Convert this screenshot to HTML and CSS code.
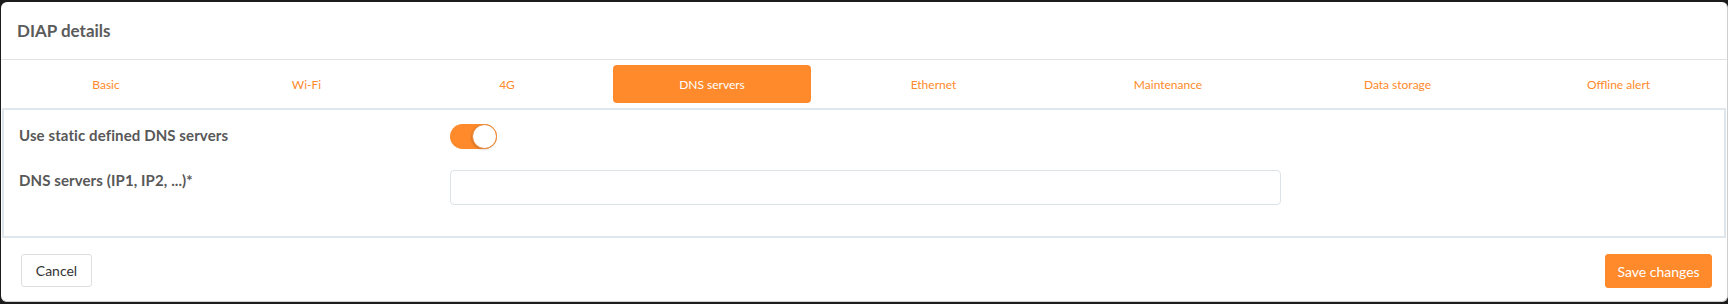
FILE: index.html
```html
<!DOCTYPE html>
<html lang="en">
<head>
  <meta charset="UTF-8" />
  <meta name="viewport" content="width=device-width,initial-scale=1.0">
  <title>DIAP details</title>
  <link rel="stylesheet" href="styles.css">
</head>
<body>
  <div class="modal">
    <div class="modal-header">
      <h4 class="modal-title">DIAP details</h4>
    </div>

    <ul class="tabs">
      <li><a href="#">Basic</a></li>
      <li><a href="#">Wi-Fi</a></li>
      <li><a href="#">4G</a></li>
      <li><a href="#" class="active">DNS servers</a></li>
      <li><a href="#">Ethernet</a></li>
      <li><a href="#">Maintenance</a></li>
      <li><a href="#">Data storage</a></li>
      <li><a href="#">Offline alert</a></li>
    </ul>

    <div class="tab-panel">
      <div class="form-row">
        <label class="form-label">Use static defined DNS servers</label>
        <div class="form-control">
          <span class="switch on"><span class="knob"></span></span>
        </div>
      </div>
      <div class="form-row">
        <label class="form-label" for="dns">DNS servers (IP1, IP2, ...)*</label>
        <div class="form-control">
          <input id="dns" class="text-input" type="text">
        </div>
      </div>
    </div>

    <div class="modal-footer">
      <button class="btn btn-default">Cancel</button>
      <button class="btn btn-primary">Save changes</button>
    </div>
  </div>
</body>
</html>
```

FILE: styles.css
```css
html, body {
  margin: 0;
  padding: 0;
  height: 100vh;
  overflow: hidden;
  background-color: #1c1c1c;
  font-family: Lato, "Open Sans", sans-serif;
}

.modal {
  display: flex;
  flex-direction: column;
  box-sizing: border-box;
  width: 1727px;
  height: 300px;
  margin: 2px 0 0 1px;
  background: #fff;
  border-right: 1px solid #cfcfcf;
  border-bottom: 1px solid #cfcfcf;
  border-radius: 6px;
  overflow: hidden;
}

.modal-header {
  flex: 0 0 58px;
  display: flex;
  align-items: center;
  padding: 0 16px;
  border-bottom: 1px solid #e2e2e2;
  box-sizing: border-box;
}

.modal-title {
  margin: 0;
  font-size: 17px;
  font-weight: 700;
  color: #5b5b5b;
}

/* column widths follow the original tab spacing */
.tabs {
  display: grid;
  grid-template-columns: 202fr 199fr 202fr 208fr 235fr 234fr 225fr 217fr;
  list-style: none;
  margin: 0;
  padding: 5px 0 5px 4px;
}

.tabs li {
  padding: 0 5px;
}

.tabs a {
  display: flex;
  align-items: center;
  justify-content: center;
  height: 38px;
  border-radius: 4px;
  font-size: 12px;
  color: #ff8a2b;
  text-decoration: none;
}

.tabs a.active {
  background: #ff8a2b;
  color: #fff;
}

.tab-panel {
  margin: 0 1px;
  padding: 14px 15px 31px;
  border: 2px solid #dfe6ec;
  display: flex;
  flex-direction: column;
  gap: 21px;
}

.form-row {
  display: grid;
  grid-template-columns: 431px 831px;
}

.form-label {
  font-size: 15px;
  font-weight: 700;
  color: #585858;
  line-height: 22px;
  letter-spacing: 0.1px;
}

.form-row + .form-row .form-label {
  line-height: 20px;
}

.switch {
  display: block;
  position: relative;
  width: 47px;
  height: 25px;
  border-radius: 13px;
  background: #ff8a2b;
}

.switch .knob {
  position: absolute;
  top: 0;
  right: 0;
  width: 23px;
  height: 23px;
  border-radius: 50%;
  background: #fff;
  border: 1px solid #e8832f;
  box-shadow: -1px 1px 2px rgba(0,0,0,0.15);
}

.text-input {
  display: block;
  box-sizing: border-box;
  width: 831px;
  height: 35px;
  margin: 0;
  border: 1px solid #dce3e7;
  border-radius: 4px;
  font-family: inherit;
  font-size: 14px;
  outline: none;
}

.modal-footer {
  flex: 1;
  display: flex;
  justify-content: space-between;
  align-items: flex-start;
  padding: 16px 15px 0 20px;
}

.btn {
  height: 34px;
  border-radius: 3px;
  font-family: inherit;
  font-size: 14px;
  cursor: pointer;
}

.btn-default {
  width: 71px;
  height: 33px;
  background: #fff;
  border: 1px solid #dedede;
  color: #333;
}

.btn-primary {
  width: 107px;
  background: #ff8a2b;
  border: 1px solid #ff8a2b;
  color: #fff;
}
```
